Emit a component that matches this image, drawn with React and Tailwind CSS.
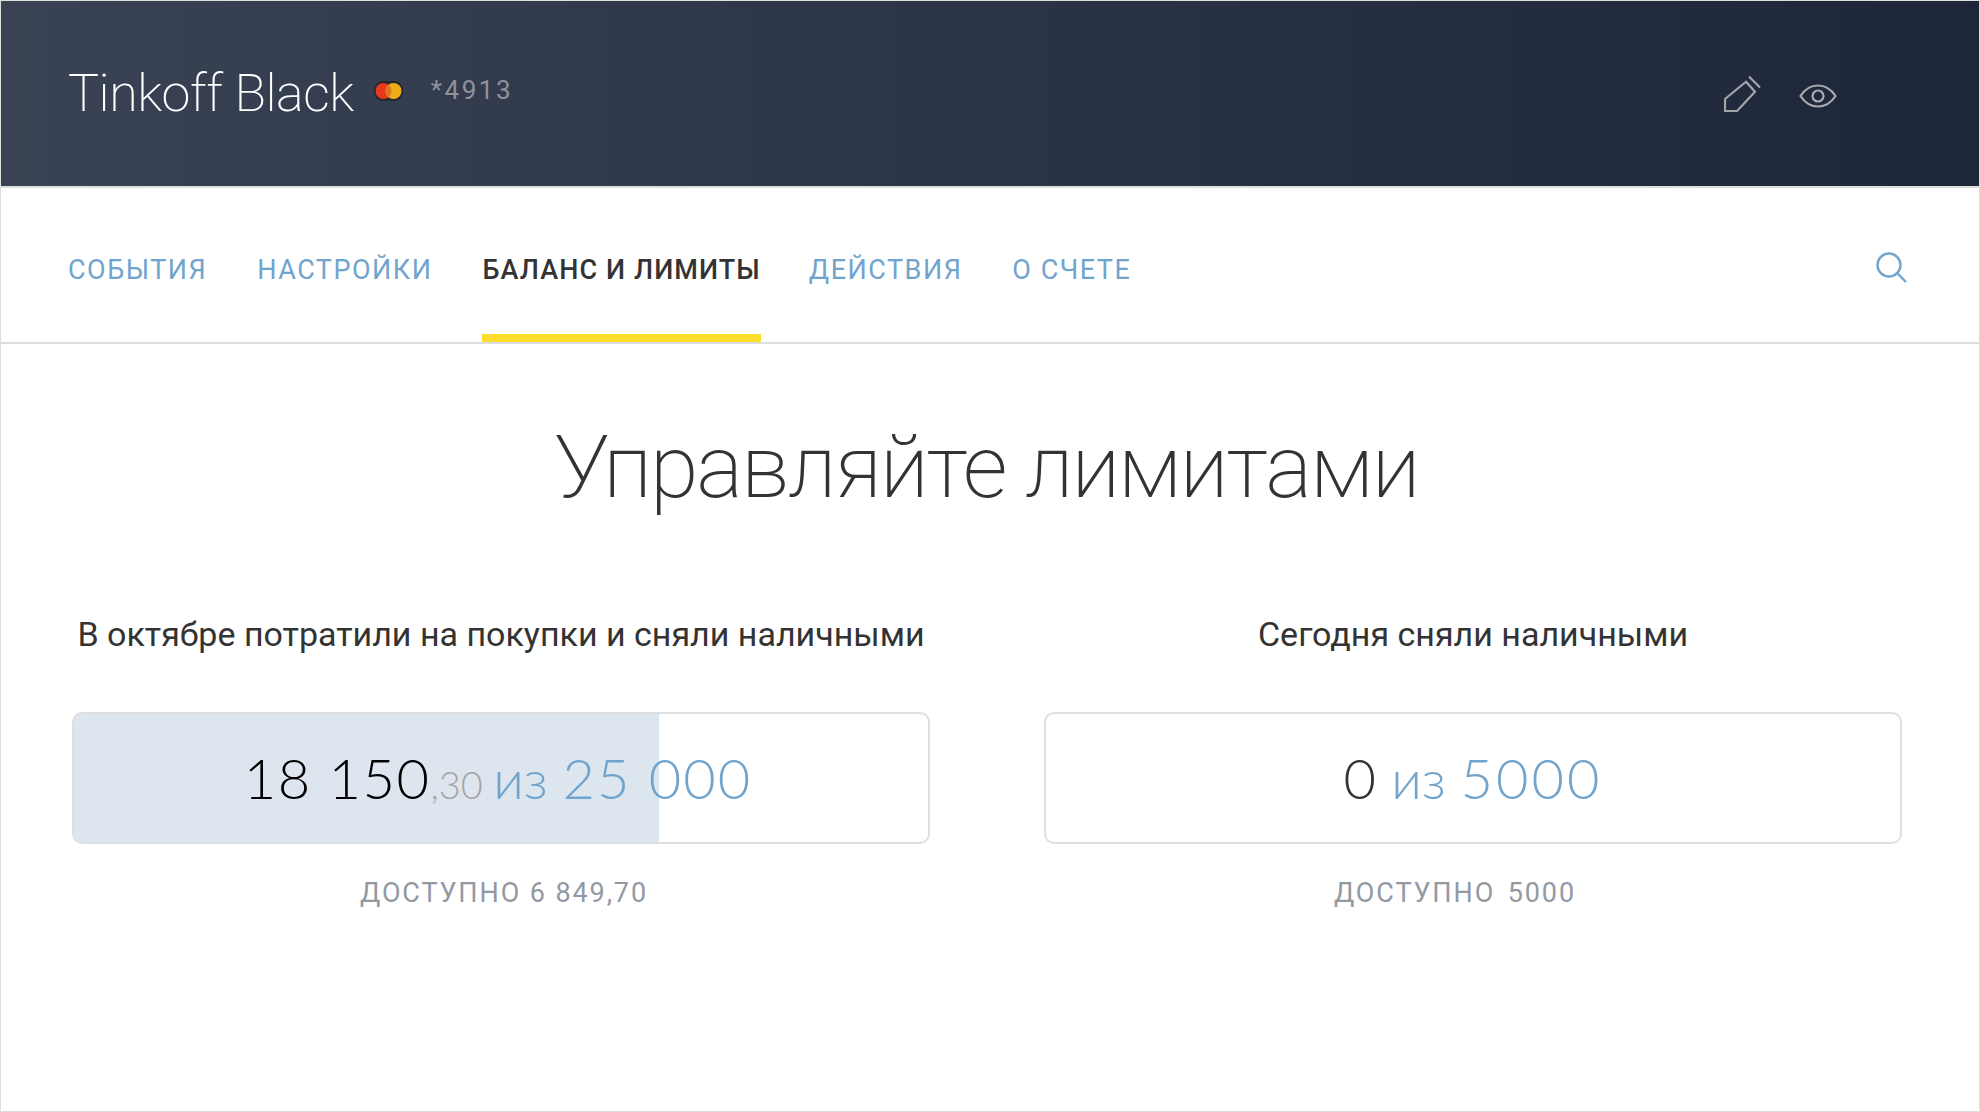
import React from 'react'

const tabs = [
  { label: 'СОБЫТИЯ' },
  { label: 'НАСТРОЙКИ' },
  { label: 'БАЛАНС И ЛИМИТЫ', active: true },
  { label: 'ДЕЙСТВИЯ' },
  { label: 'О СЧЕТЕ' },
]

const CardLogo = () => (
  <svg width="29" height="20" viewBox="0 0 29 20" className="block">
    <rect x="0" y="0" width="29" height="20" rx="9" fill="#25272f" />
    <circle cx="9.500" cy="10" r="8" fill="#e8391a" />
    <circle cx="19.500" cy="10" r="8" fill="#f0ab1b" />
    <path d="M14.500 3.800a8 8 0 0 1 0 12.400a8 8 0 0 1 0-12.400z" fill="#e0741f" />
  </svg>
)

const PencilIcon = () => (
  <svg width="37" height="37" viewBox="0 0 37 37" fill="none" stroke="#a3a5aa" strokeWidth="2.200" className="block">
    <path d="M22 6.700L31 16.700L13 36H1V24z" />
    <path d="M25 1.500L36 12.500" />
  </svg>
)

const EyeIcon = () => (
  <svg width="38" height="24" viewBox="0 0 38 24" fill="none" stroke="#a9abb0" strokeWidth="2.200" className="block">
    <path d="M1.500 12C6 5 12 1.500 19 1.500S32 5 36.500 12C32 19 26 22.500 19 22.500S6 19 1.500 12z" />
    <circle cx="19" cy="12" r="5.500" />
  </svg>
)

const SearchIcon = () => (
  <svg width="32" height="32" viewBox="0 0 32 32" fill="none" stroke="#71a4cd" strokeWidth="2.400" className="block">
    <circle cx="13" cy="13" r="11.500" />
    <path d="M21.500 21.500L30 30" />
  </svg>
)

const LimitCard = ({ title, fill, children, available, availableClass, amountClass }) => (
  <div className="flex flex-col">
    <div className="text-center text-[34px] leading-[40px] text-[#333]">{title}</div>
    <div className="relative mt-[58px] h-[132px] overflow-hidden rounded-[10px] border-2 border-[#dedfe0] bg-white">
      {fill}
      <div className={`relative flex h-full items-center justify-center font-['Lato'] font-light whitespace-pre ${amountClass}`}>{children}</div>
    </div>
    <div className={`mt-[32px] text-center font-['Roboto'] text-[27px] leading-[34px] tracking-[1.9px] text-[#9299a2] ${availableClass}`}>{available}</div>
  </div>
)

const App = () => {
  return (
    <div className="flex h-[1112px] w-[1980px] flex-col overflow-hidden border border-[#dedede] bg-white font-['Roboto',sans-serif]">
      <header className="flex h-[185px] shrink-0 items-center justify-between bg-gradient-to-r from-[#394354] to-[#1e263a] pl-[67px] pr-[142px]">
        <div className="flex items-center">
          <h1 className="text-[52px] font-[200] leading-none tracking-[-0.5px] text-white">Tinkoff Black</h1>
          <div className="ml-[20px] mt-[-6px]"><CardLogo /></div>
          <span className="ml-[28px] mt-[-6px] text-[26px] tracking-widest text-[#8d929c]">*4913</span>
        </div>
        <div className="flex items-center gap-[38px]">
          <PencilIcon />
          <div className="mt-1"><EyeIcon /></div>
        </div>
      </header>

      <nav className="flex h-[158px] shrink-0 items-stretch justify-between border-y-2 border-[#dedede] pl-[67px] pr-[71px]">
        <div className="flex gap-[50px]">
          {tabs.map((tab) => (
            <div
              key={tab.label}
              className={
                tab.active
                  ? 'mr-[-2px] flex items-center border-b-8 border-[#ffdd2d] pt-[18px] text-[27px] font-medium tracking-[1.1px] text-[#333]'
                  : 'flex items-center border-b-8 border-transparent pt-[18px] text-[27px] tracking-[1.5px] text-[#71a4cd]'
              }
            >
              {tab.label}
            </div>
          ))}
        </div>
        <div className="flex items-center pt-[6px]"><SearchIcon /></div>
      </nav>

      <main className="flex flex-1 flex-col">
        <h2 className="mt-[73px] pr-[7px] text-center text-[88px] font-extralight leading-[100px] tracking-[-2px] text-[#333]">Управляйте лимитами</h2>
        <div className="mt-[97px] grid grid-cols-[858px_858px] gap-[114px] pl-[71px]">
          <LimitCard
            title="В октябре потратили на покупки и сняли наличными"
            available="ДОСТУПНО 6 849,70"
            availableClass="pl-[6px]"
            amountClass="pr-[6px]"
            fill={<div className="absolute inset-y-0 left-0 w-[585px] bg-[#dde5ee]"></div>}
          >
            <span className="text-[56px] text-black tracking-[1.500px]">18 150</span>
            <span className="mt-3 text-[38px] text-[#a5a5a5]">,30 </span>
            <span className="text-[54px] text-[#71a4cd]">из </span>
            <span className="text-[56px] text-[#71a4cd] tracking-[2px]">25 000</span>
          </LimitCard>
          <LimitCard
            title="Сегодня сняли наличными"
            available="ДОСТУПНО 5000"
            availableClass="pr-9 [word-spacing:4px]"
            amountClass=""
            fill={null}
          >
            <span className="text-[56px] text-[#333]">0 </span>
            <span className="text-[54px] text-[#71a4cd]">из </span>
            <span className="text-[56px] text-[#71a4cd] tracking-[3px]">5000</span>
          </LimitCard>
        </div>
      </main>
    </div>
  )
}

export default App
